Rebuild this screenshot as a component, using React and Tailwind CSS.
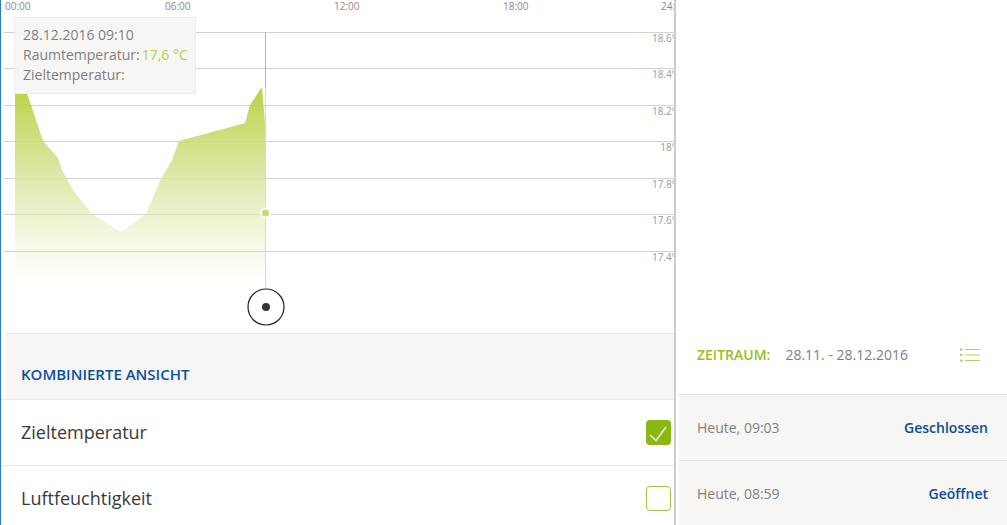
import React from 'react';

const gridLines = [32, 68, 105, 141, 178, 214, 251];
const yLabels = ['18.6°', '18.4°', '18.2°', '18°', '17.8°', '17.6°', '17.4°'];
const xLabels = [
    { x: 5, text: '00:00' },
    { x: 165, text: '06:00' },
    { x: 334, text: '12:00' },
    { x: 503, text: '18:00' },
    { x: 661, text: '24:00' },
];
const areaPoints = '15,285 15,93 27,93 43,141 58,158 62,170 73,190 92,214 121,232 146,214 160,181 172,160 179,141 245,123 250,105 262,87 265.5,130 265.5,285';

const Chart = () => (
    <div className="relative -ml-px h-[333px] w-[676px] overflow-hidden">
        <svg width="676" height="333" className="block">
            <defs>
                <linearGradient id="areaFill" x1="0" y1="87" x2="0" y2="285" gradientUnits="userSpaceOnUse">
                    <stop offset="0" stopColor="#b5d03d" stopOpacity="0.95" />
                    <stop offset="0.42" stopColor="#d6e598" stopOpacity="0.9" />
                    <stop offset="1" stopColor="#e6efc0" stopOpacity="0" />
                </linearGradient>
            </defs>
            {gridLines.map((y) => (
                <line key={y} x1="4" x2="676" y1={y + 0.5} y2={y + 0.5} stroke="#d2d2d2" />
            ))}
            <polygon points={areaPoints} fill="url(#areaFill)" />
            <line x1="265.5" x2="265.5" y1="32" y2="88" stroke="#b4b4b4" />
            <line x1="265.5" x2="265.5" y1="88" y2="289" stroke="#d8d8d8" />
            <circle cx="265.5" cy="213" r="4.5" fill="#c8db70" stroke="#ffffff" strokeWidth="2" />
            <circle cx="266" cy="307" r="18" fill="#ffffff" stroke="#222222" strokeWidth="1.2" />
            <circle cx="266" cy="307" r="4" fill="#333333" />
        </svg>
        {xLabels.map((l) => (
            <span
                key={l.text}
                className="absolute top-0 text-[10px] leading-[13px] text-[#888888]"
                style={{ left: l.x }}
            >
                {l.text}
            </span>
        ))}
        {yLabels.map((label, i) => (
            <span
                key={label}
                className="absolute right-0 text-[10px] leading-[13px] text-[#999999]"
                style={{ top: gridLines[i] }}
            >
                {label}
            </span>
        ))}
        <div className="absolute left-[14px] top-[17px] h-[77px] w-[182px] border border-[#ececec] bg-[#f6f6f5] pl-2 pt-[7px] text-sm leading-[20px] text-[#808080]">
            <div>28.12.2016 09:10</div>
            <div className="whitespace-nowrap">
                Raumtemperatur:<span className="ml-[2px] text-[#b5cf48]">17,6 °C</span>
            </div>
            <div>Zieltemperatur:</div>
        </div>
    </div>
);

const CheckRow = ({ label, checked }) => (
    <div className="flex h-[66px] items-center justify-between border-t border-[#e5e5e5] pl-5 pr-[3px]">
        <span className="pb-[2px] text-lg text-[#3a3a3a]">{label}</span>
        {checked ? (
            <span className="flex h-[25px] w-[25px] items-center justify-center rounded-[4px] bg-[#8ab711]">
                <svg width="25" height="25" viewBox="0 0 25 25" fill="none" stroke="#e4efc4" strokeWidth="1.6">
                    <path d="M4 15 L10 20.5 L20 7" />
                </svg>
            </span>
        ) : (
            <span className="h-[25px] w-[25px] rounded-[4px] border border-[#a3c04a] bg-white" />
        )}
    </div>
);

const HistoryRow = ({ time, status }) => (
    <div className="flex h-[66px] items-center justify-between border-t border-[#e3e3e3] pl-[18px] pr-[19px] text-sm">
        <span className="text-[#808080]">{time}</span>
        <span className="font-semibold text-[#0f4c92]">{status}</span>
    </div>
);

const ListIcon = () => (
    <svg width="20" height="14" viewBox="0 0 20 14" fill="none" stroke="#b4cf5c" strokeWidth="1">
        <path d="M0 1.5h2.5M0 7h2.5M0 12.5h2.5" strokeWidth="2" />
        <path d="M5 1.5h15M5 7h15M5 12.5h15" />
    </svg>
);

export default function App() {
    return (
        <div
            className="flex h-[525px] w-[1007px] overflow-hidden bg-white"
            style={{ fontFamily: '"Open Sans", sans-serif' }}
        >
            <div className="h-full w-[674px] shrink-0 border-l border-[#2a7fc0]">
                <Chart />
                <div className="ml-[5px] flex h-[66px] items-end border-t border-[#e5e5e5] bg-[#f6f6f5] pb-[14px] pl-[15px] text-[15px] font-semibold text-[#0f4f9a]">
                    KOMBINIERTE ANSICHT
                </div>
                <CheckRow label="Zieltemperatur" checked />
                <CheckRow label="Luftfeuchtigkeit" />
            </div>
            <div className="relative h-full w-[2px] shrink-0 bg-[#cccccc]" />
            <div className="flex h-full flex-1 flex-col justify-end pl-[3px]">
                <div className="flex h-[66px] items-center pb-[12px] pl-[18px] pr-[27px] text-sm">
                    <span className="font-semibold text-[#97bd1e]">ZEITRAUM:</span>
                    <span className="ml-[15px] text-[#808080]">28.11. - 28.12.2016</span>
                    <span className="ml-auto flex">
                        <ListIcon />
                    </span>
                </div>
                <div className="h-[131px] bg-[#f6f6f5]">
                    <HistoryRow time="Heute, 09:03" status="Geschlossen" />
                    <HistoryRow time="Heute, 08:59" status="Geöffnet" />
                </div>
            </div>
        </div>
    );
}
